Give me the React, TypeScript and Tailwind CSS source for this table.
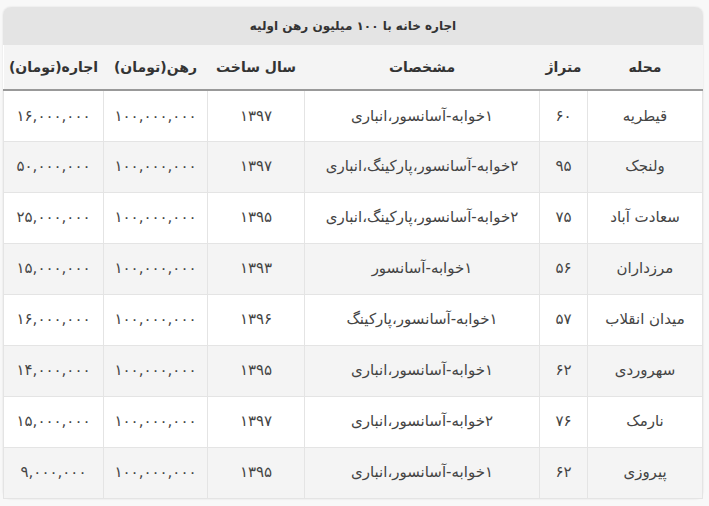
const rows = [
  ["قیطریه", "۶۰", "۱خوابه-آسانسور،انباری", "۱۳۹۷", "۱۰۰,۰۰۰,۰۰۰", "۱۶,۰۰۰,۰۰۰"],
  ["ولنجک", "۹۵", "۲خوابه-آسانسور،پارکینگ،انباری", "۱۳۹۷", "۱۰۰,۰۰۰,۰۰۰", "۵۰,۰۰۰,۰۰۰"],
  ["سعادت آباد", "۷۵", "۲خوابه-آسانسور،پارکینگ،انباری", "۱۳۹۵", "۱۰۰,۰۰۰,۰۰۰", "۲۵,۰۰۰,۰۰۰"],
  ["مرزداران", "۵۶", "۱خوابه-آسانسور", "۱۳۹۳", "۱۰۰,۰۰۰,۰۰۰", "۱۵,۰۰۰,۰۰۰"],
  ["میدان انقلاب", "۵۷", "۱خوابه-آسانسور،پارکینگ", "۱۳۹۶", "۱۰۰,۰۰۰,۰۰۰", "۱۶,۰۰۰,۰۰۰"],
  ["سهروردی", "۶۲", "۱خوابه-آسانسور،انباری", "۱۳۹۵", "۱۰۰,۰۰۰,۰۰۰", "۱۴,۰۰۰,۰۰۰"],
  ["نارمک", "۷۶", "۲خوابه-آسانسور،انباری", "۱۳۹۷", "۱۰۰,۰۰۰,۰۰۰", "۱۵,۰۰۰,۰۰۰"],
  ["پیروزی", "۶۲", "۱خوابه-آسانسور،انباری", "۱۳۹۵", "۱۰۰,۰۰۰,۰۰۰", "۹,۰۰۰,۰۰۰"],
];

const headers = ["محله", "متراژ", "مشخصات", "سال ساخت", "رهن(تومان)", "اجاره(تومان)"];

export default function App() {
  return (
    <div className="min-h-screen bg-[#f8f8f8] pt-[7px] pl-[3px] font-['DejaVu_Sans',sans-serif]">
      <div dir="rtl" className="w-[700px] rounded-lg shadow-[0_0_2px_rgba(0,0,0,0.12)]">
        <div className="h-[38px] rounded-t-lg bg-[#e4e4e4] flex items-center justify-center text-[12px] font-bold text-[#333]">
          اجاره خانه با ۱۰۰ میلیون رهن اولیه
        </div>
        <table className="w-full border-collapse table-fixed bg-white text-[15px] text-[#444]">
          <colgroup>
            <col className="w-[115px]" />
            <col className="w-[48px]" />
            <col className="w-[235px]" />
            <col className="w-[97px]" />
            <col className="w-[104px]" />
            <col className="w-[100px]" />
          </colgroup>
          <thead>
            <tr className="h-[45px] bg-[#f4f4f4] border-b-2 border-[#999]">
              {headers.map((h) => (
                <th key={h} className="font-bold text-[14px] text-[#333] text-center whitespace-nowrap px-1">
                  {h}
                </th>
              ))}
            </tr>
          </thead>
          <tbody>
            {rows.map((r, i) => (
              <tr key={i} className={i % 2 === 1 ? "h-[51px] bg-[#f4f4f4]" : "h-[51px] bg-white"}>
                {r.map((c, j) => (
                  <td key={j} className="border border-[#e4e4e4] text-center whitespace-nowrap px-1">
                    {c}
                  </td>
                ))}
              </tr>
            ))}
          </tbody>
        </table>
      </div>
    </div>
  );
}
